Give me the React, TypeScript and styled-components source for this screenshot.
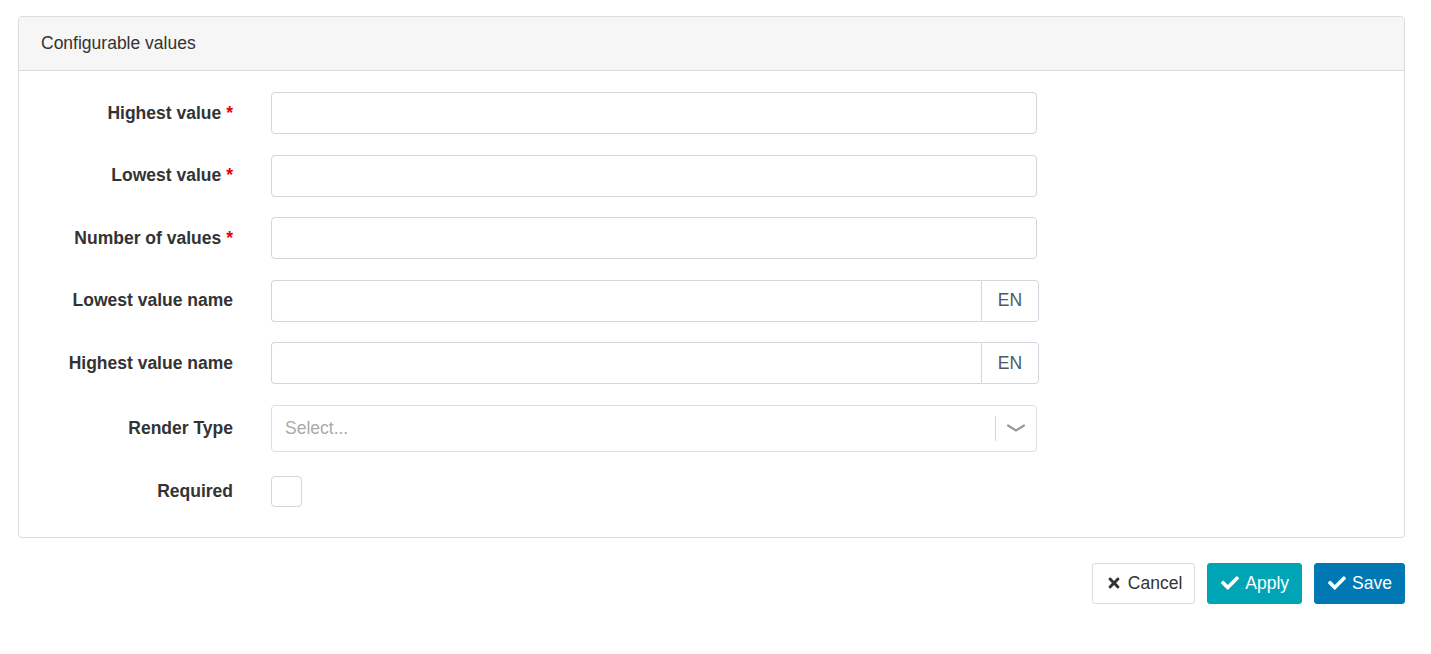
import * as React from 'react';
import styled, { createGlobalStyle } from 'styled-components';
import { FaCheck, FaTimes } from 'react-icons/fa';

const GlobalStyle = createGlobalStyle`
  body {
    margin: 0;
    background: #fff;
    font-family: "Liberation Sans", Arial, sans-serif;
    color: #333;
  }
  * {
    box-sizing: border-box;
  }
`;

const Page = styled.div`
  padding: 16px 26px 0 18px;
`;

const Panel = styled.div`
  border: 1px solid #dcdcdc;
  border-radius: 4px;
  background: #fff;
`;

const PanelHeader = styled.div`
  height: 54px;
  background: #f6f6f6;
  border-bottom: 1px solid #dcdcdc;
  border-radius: 4px 4px 0 0;
  display: flex;
  align-items: center;
  padding-left: 22px;
  font-size: 17.5px;
  color: #333;
`;

const PanelBody = styled.div`
  padding: 21px 0 30px;
`;

const Row = styled.div<{ $gap?: number }>`
  display: grid;
  grid-template-columns: 214px 768px;
  column-gap: 38px;
  align-items: center;
  margin-bottom: ${(p) => (p.$gap ?? 20.5)}px;
  &:last-child {
    margin-bottom: 0;
  }
`;

const Label = styled.label`
  text-align: right;
  font-weight: bold;
  font-size: 17.5px;
  color: #333;
`;

const Star = styled.span`
  color: #e8000b;
  margin-left: 5px;
`;

const TextInput = styled.input`
  width: 766px;
  height: 42px;
  border: 1px solid #cfd6dd;
  border-radius: 4px;
  padding: 0 12px;
  font-size: 17.5px;
  font-family: inherit;
  outline: none;
`;

const InputGroup = styled.div`
  display: flex;
  width: 768px;
  height: 42px;
`;

const GroupInput = styled.input`
  flex: 1;
  height: 100%;
  border: 1px solid #cfd6dd;
  border-right: none;
  border-radius: 4px 0 0 4px;
  padding: 0 12px;
  font-size: 17.5px;
  outline: none;
`;

const Addon = styled.span`
  width: 58px;
  height: 100%;
  display: flex;
  align-items: center;
  justify-content: center;
  border: 1px solid #cfd6dd;
  border-radius: 0 4px 4px 0;
  font-size: 17.5px;
  color: #4d5966;
`;

const Select = styled.div`
  width: 766px;
  height: 47px;
  border: 1px solid #dedede;
  border-radius: 4px;
  display: flex;
  align-items: center;
`;

const Placeholder = styled.span`
  flex: 1;
  padding-left: 13px;
  font-size: 17.5px;
  color: #aaa;
`;

const Separator = styled.span`
  width: 1px;
  height: 25px;
  background: #d6d6d6;
`;

const Arrow = styled.span`
  width: 40px;
  display: flex;
  justify-content: center;
  align-items: center;
`;

const Checkbox = styled.span`
  width: 31px;
  height: 31px;
  border: 1px solid #cfd6dd;
  border-radius: 4px;
`;

const Actions = styled.div`
  display: flex;
  justify-content: flex-end;
  gap: 12px;
  margin-top: 25px;
`;

const Button = styled.button<{ $variant: 'default' | 'info' | 'primary' }>`
  height: 41px;
  display: inline-flex;
  align-items: center;
  gap: 6px;
  padding: 0 12px 0 13px;
  font-size: 17.5px;
  font-family: inherit;
  border-radius: 3px;
  border: 1px solid
    ${(p) => (p.$variant === 'default' ? '#dcdcdc' : p.$variant === 'info' ? '#00a5b5' : '#0078b4')};
  background: ${(p) => (p.$variant === 'default' ? '#fff' : p.$variant === 'info' ? '#00a5b5' : '#0078b4')};
  color: ${(p) => (p.$variant === 'default' ? '#333' : '#fff')};
  cursor: pointer;
`;

const fields = [
  { label: 'Highest value', required: true },
  { label: 'Lowest value', required: true },
  { label: 'Number of values', required: true },
];

const localized = ['Lowest value name', 'Highest value name'];

export default function App() {
  return (
    <Page>
      <GlobalStyle />
      <Panel>
        <PanelHeader>Configurable values</PanelHeader>
        <PanelBody>
          {fields.map((f) => (
            <Row key={f.label}>
              <Label>
                {f.label}
                {f.required && <Star>*</Star>}
              </Label>
              <TextInput type="text" />
            </Row>
          ))}
          {localized.map((l) => (
            <Row key={l}>
              <Label>{l}</Label>
              <InputGroup>
                <GroupInput type="text" />
                <Addon>EN</Addon>
              </InputGroup>
            </Row>
          ))}
          <Row $gap={24}>
            <Label>Render Type</Label>
            <Select>
              <Placeholder>Select...</Placeholder>
              <Separator />
              <Arrow>
                <svg width="18" height="8" viewBox="0 0 18 8">
                  <path d="M1 1.5 L9 6.5 L17 1.5" fill="none" stroke="#999" strokeWidth="2.2" strokeLinecap="round" />
                </svg>
              </Arrow>
            </Select>
          </Row>
          <Row>
            <Label>Required</Label>
            <Checkbox />
          </Row>
        </PanelBody>
      </Panel>
      <Actions>
        <Button $variant="default">
          <FaTimes size={16} />
          Cancel
        </Button>
        <Button $variant="info">
          <FaCheck size={18} />
          Apply
        </Button>
        <Button $variant="primary">
          <FaCheck size={18} />
          Save
        </Button>
      </Actions>
    </Page>
  );
}
